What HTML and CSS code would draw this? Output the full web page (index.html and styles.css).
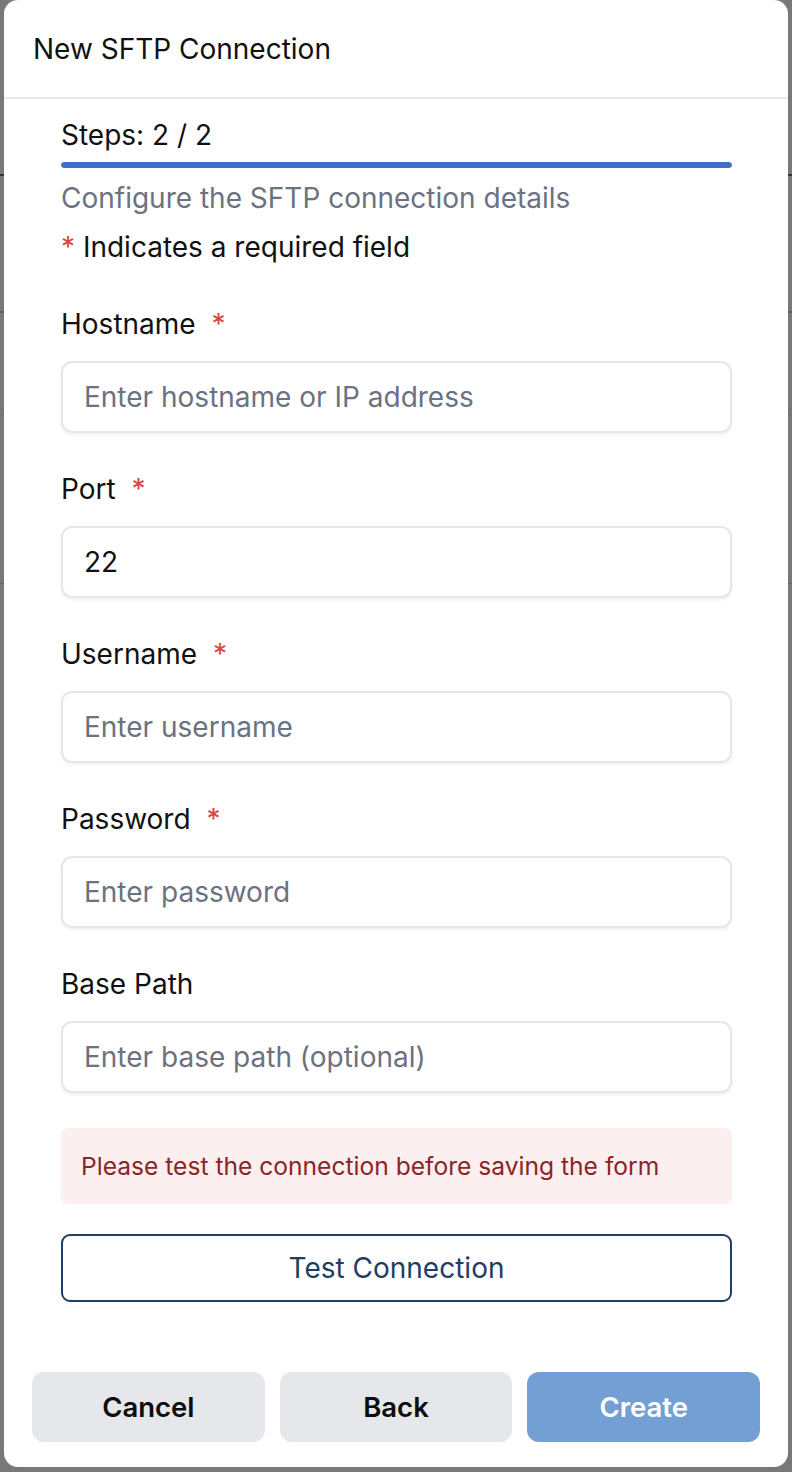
FILE: index.html
```html
<!DOCTYPE html>
<html lang="en">
<head>
<meta charset="utf-8">
<title>New SFTP Connection</title>
<link rel="stylesheet" href="styles.css">
</head>
<body>
<div class="backdrop">
  <div class="bg-line l1"></div>
  <div class="bg-line l2"></div>
  <div class="bg-line l3"></div>
  <div class="bg-line l4"></div>
  <div class="modal">
    <div class="modal-header">New SFTP Connection</div>
    <div class="modal-body">
      <div class="steps">Steps: 2 / 2</div>
      <div class="progress"><div class="progress-fill"></div></div>
      <div class="subtitle">Configure the SFTP connection details</div>
      <div class="required-note"><span class="star">*</span> Indicates a required field</div>

      <div class="field first">
        <label class="label">Hostname <span class="star">*</span></label>
        <div class="input placeholder">Enter hostname or IP address</div>
      </div>
      <div class="field">
        <label class="label">Port <span class="star">*</span></label>
        <div class="input">22</div>
      </div>
      <div class="field">
        <label class="label">Username <span class="star">*</span></label>
        <div class="input placeholder">Enter username</div>
      </div>
      <div class="field">
        <label class="label">Password <span class="star">*</span></label>
        <div class="input placeholder">Enter password</div>
      </div>
      <div class="field">
        <label class="label">Base Path</label>
        <div class="input placeholder">Enter base path (optional)</div>
      </div>

      <div class="alert">Please test the connection before saving the form</div>
      <button class="btn-outline">Test Connection</button>
    </div>
    <div class="modal-footer">
      <button class="btn btn-grey">Cancel</button>
      <button class="btn btn-grey">Back</button>
      <button class="btn btn-primary">Create</button>
    </div>
  </div>
</div>
</body>
</html>
```

FILE: styles.css
```css
* { box-sizing: border-box; }
html, body {
  margin: 0;
  padding: 0;
  width: 792px;
  height: 1472px;
  overflow: hidden;
}
body {
  font-family: Inter, "Noto Sans", "Liberation Sans", sans-serif;
  background: #777777;
}
.backdrop {
  position: relative;
  width: 792px;
  height: 1472px;
  padding: 0 4px;
  background: #787878;
}
.bg-line {
  position: absolute;
  left: 0;
  right: 0;
  height: 2px;
}
.l1 { top: 174px; background: #333; }
.l2 { top: 311px; background: #5e5e5e; }
.l3 { top: 408px; height: 1px; background: #6e6e6e; }
.l4 { top: 583px; height: 1px; background: #6a6a6a; }

.modal {
  position: relative;
  background: #ffffff;
  border-radius: 14px;
  height: 1467px;
  display: flex;
  flex-direction: column;
}
.modal-header {
  height: 99px;
  padding: 31px 29px 0;
  font-size: 28px;
  line-height: 36px;
  color: #111;
  border-bottom: 2px solid #e8e8e8;
}
.modal-body {
  padding: 18px 56px 0 57px;
  flex: 1;
  display: flex;
  flex-direction: column;
}
.steps {
  font-size: 28px;
  line-height: 36px;
  color: #111;
}
.progress {
  margin-top: 9px;
  height: 6px;
  border-radius: 3px;
  background: #e5e7eb;
  overflow: hidden;
}
.progress-fill {
  width: 100%;
  height: 100%;
  background: #3b73c1;
  border-radius: 3px;
}
.subtitle {
  margin-top: 12px;
  font-size: 28px;
  line-height: 36px;
  color: #6b7280;
}
.required-note {
  margin-top: 13px;
  font-size: 28px;
  line-height: 36px;
  color: #111;
}
.star { color: #d9463e; }
.label .star { margin-left: 8px; }
.field { margin-top: 38px; }
.field.first { margin-top: 41px; }
.label {
  display: block;
  font-size: 28px;
  line-height: 36px;
  color: #111;
}
.input {
  margin-top: 19px;
  height: 72px;
  border: 2px solid #e6e6e8;
  border-radius: 11px;
  box-shadow: 0 2px 3px rgba(0, 0, 0, 0.06);
  padding: 0 21px;
  display: flex;
  align-items: center;
  font-size: 28px;
  color: #111;
}
.input.placeholder { color: #6b7280; }
.alert {
  margin-top: 35px;
  height: 76px;
  background: #fcefef;
  border-radius: 7px;
  padding: 0 20px;
  display: flex;
  align-items: center;
  font-size: 24.6px;
  color: #8b2525;
}
.btn-outline {
  margin-top: 30px;
  height: 68px;
  width: 100%;
  background: #fff;
  border: 2px solid #1f3e63;
  border-radius: 9px;
  font-family: inherit;
  font-size: 28px;
  color: #1f3e63;
}
.modal-footer {
  padding: 0 28px 25px;
  display: flex;
  gap: 15px;
}
.btn {
  flex: 1;
  height: 70px;
  border: none;
  border-radius: 12px;
  font-family: inherit;
  font-size: 27.5px;
  font-weight: 600;
}
.btn-grey { background: #e5e7eb; color: #0d0d0d; }
.btn-primary { background: #739fd5; color: #ffffff; }
```
